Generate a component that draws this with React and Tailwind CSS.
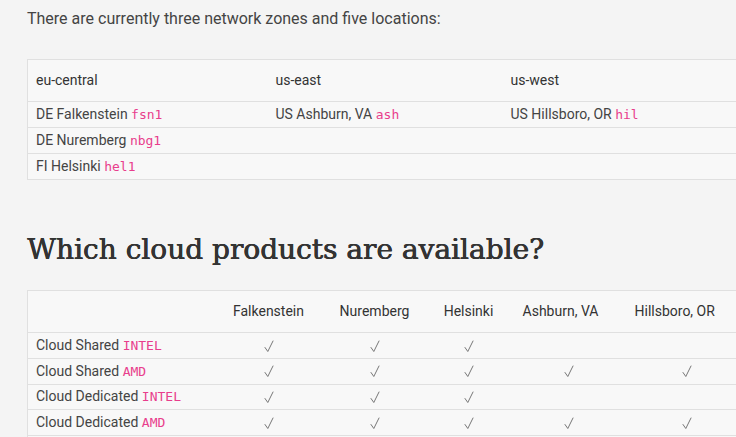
import React from "react";

const Code = ({ children }) => (
  <code className="text-[#e83e8c] text-[13px] [font-family:'DejaVu_Sans_Mono',monospace]">{children}</code>
);

const Check = () => (
  <svg width="10" height="13" viewBox="0 0 10 13" className="inline-block align-middle" fill="none">
    <path d="M1 7.5 L3.8 11.5 L9 1" stroke="#777" strokeWidth="1" strokeLinecap="round" strokeLinejoin="round" />
  </svg>
);

export default function App() {
  const rows = [
    ["Cloud Shared ", "INTEL", [1, 1, 1, 0, 0]],
    ["Cloud Shared ", "AMD", [1, 1, 1, 1, 1]],
    ["Cloud Dedicated ", "INTEL", [1, 1, 1, 0, 0]],
    ["Cloud Dedicated ", "AMD", [1, 1, 1, 1, 1]],
  ];
  const cellCls = [
    "border border-[#e0e0e0] border-x-0 text-center",
    "border border-[#e0e0e0] border-x-0 text-center",
    "border border-[#e0e0e0] border-x-0 text-center",
    "border border-[#e0e0e0] border-x-0 text-left pl-[54px]",
    "border border-[#e0e0e0] border-x-0 text-left pl-[70px]",
  ];
  return (
    <div className="w-[736px] h-[437px] overflow-hidden bg-[#f4f4f4] text-[#444] [font-family:Roboto,sans-serif]">
      <div className="pl-[27px] pt-[7px]">
        <p className="text-[16px] leading-[24px] text-[#444]">
          There are currently three network zones and five locations:
        </p>
        <table className="mt-[28px] border-collapse bg-[#f8f8f8] text-[14px] w-[760px] table-fixed">
          <colgroup>
            <col className="w-[240px]" />
            <col className="w-[235px]" />
            <col className="w-[285px]" />
          </colgroup>
          <thead>
            <tr className="h-[42px]">
              <th className="border border-[#e0e0e0] border-r-0 text-left font-normal px-[8px] text-[#333]">eu-central</th>
              <th className="border border-[#e0e0e0] border-x-0 text-left font-normal px-[8px] text-[#333]">us-east</th>
              <th className="border border-[#e0e0e0] border-x-0 text-left font-normal px-[8px] text-[#333]">us-west</th>
            </tr>
          </thead>
          <tbody>
            <tr className="h-[26px]">
              <td className="border border-[#e0e0e0] border-r-0 px-[8px]">DE Falkenstein <Code>fsn1</Code></td>
              <td className="border border-[#e0e0e0] border-x-0 px-[8px]">US Ashburn, VA <Code>ash</Code></td>
              <td className="border border-[#e0e0e0] border-x-0 px-[8px]">US Hillsboro, OR <Code>hil</Code></td>
            </tr>
            <tr className="h-[26px]">
              <td className="border border-[#e0e0e0] border-r-0 px-[8px]">DE Nuremberg <Code>nbg1</Code></td>
              <td className="border border-[#e0e0e0] border-x-0 px-[8px]"></td>
              <td className="border border-[#e0e0e0] border-x-0 px-[8px]"></td>
            </tr>
            <tr className="h-[26px]">
              <td className="border border-[#e0e0e0] border-r-0 px-[8px]">FI Helsinki <Code>hel1</Code></td>
              <td className="border border-[#e0e0e0] border-x-0 px-[8px]"></td>
              <td className="border border-[#e0e0e0] border-x-0 px-[8px]"></td>
            </tr>
          </tbody>
        </table>
        <h2 className="mt-[50px] text-[28px] leading-[40px] font-normal text-[#333] [font-family:'DejaVu_Serif',serif] [text-shadow:0.6px_0_0_#333,0.3px_0_0_#333]">
          Which cloud products are available?
        </h2>
        <table className="mt-[20px] border-collapse bg-[#f8f8f8] text-[14px] w-[760px] table-fixed">
          <colgroup>
            <col className="w-[188px]" />
            <col className="w-[106px]" />
            <col className="w-[106px]" />
            <col className="w-[82px]" />
            <col className="w-[102px]" />
            <col className="w-[176px]" />
          </colgroup>
          <thead>
            <tr className="h-[42px]">
              <th className="border border-[#e0e0e0] border-r-0"></th>
              <th className="border border-[#e0e0e0] border-x-0 font-normal text-[#333] text-center">Falkenstein</th>
              <th className="border border-[#e0e0e0] border-x-0 font-normal text-[#333] text-center">Nuremberg</th>
              <th className="border border-[#e0e0e0] border-x-0 font-normal text-[#333] text-center">Helsinki</th>
              <th className="border border-[#e0e0e0] border-x-0 font-normal text-[#333] text-center whitespace-nowrap">Ashburn, VA</th>
              <th className="border border-[#e0e0e0] border-x-0 font-normal text-[#333] text-left pl-[23px]">Hillsboro, OR</th>
            </tr>
          </thead>
          <tbody>
            {rows.map((r, i) => (
              <tr key={i} className="h-[25.75px]">
                <td className="border border-[#e0e0e0] border-r-0 px-[8px] whitespace-nowrap">
                  {r[0]}<Code>{r[1]}</Code>
                </td>
                {r[2].map((c, j) => (
                  <td key={j} className={cellCls[j]}>
                    {c ? <Check /> : null}
                  </td>
                ))}
              </tr>
            ))}
            <tr className="h-[25.75px]">
              <td className="border border-[#e0e0e0] border-r-0"></td>
              <td className="border border-[#e0e0e0] border-x-0" colSpan={5}></td>
            </tr>
          </tbody>
        </table>
      </div>
    </div>
  );
}
